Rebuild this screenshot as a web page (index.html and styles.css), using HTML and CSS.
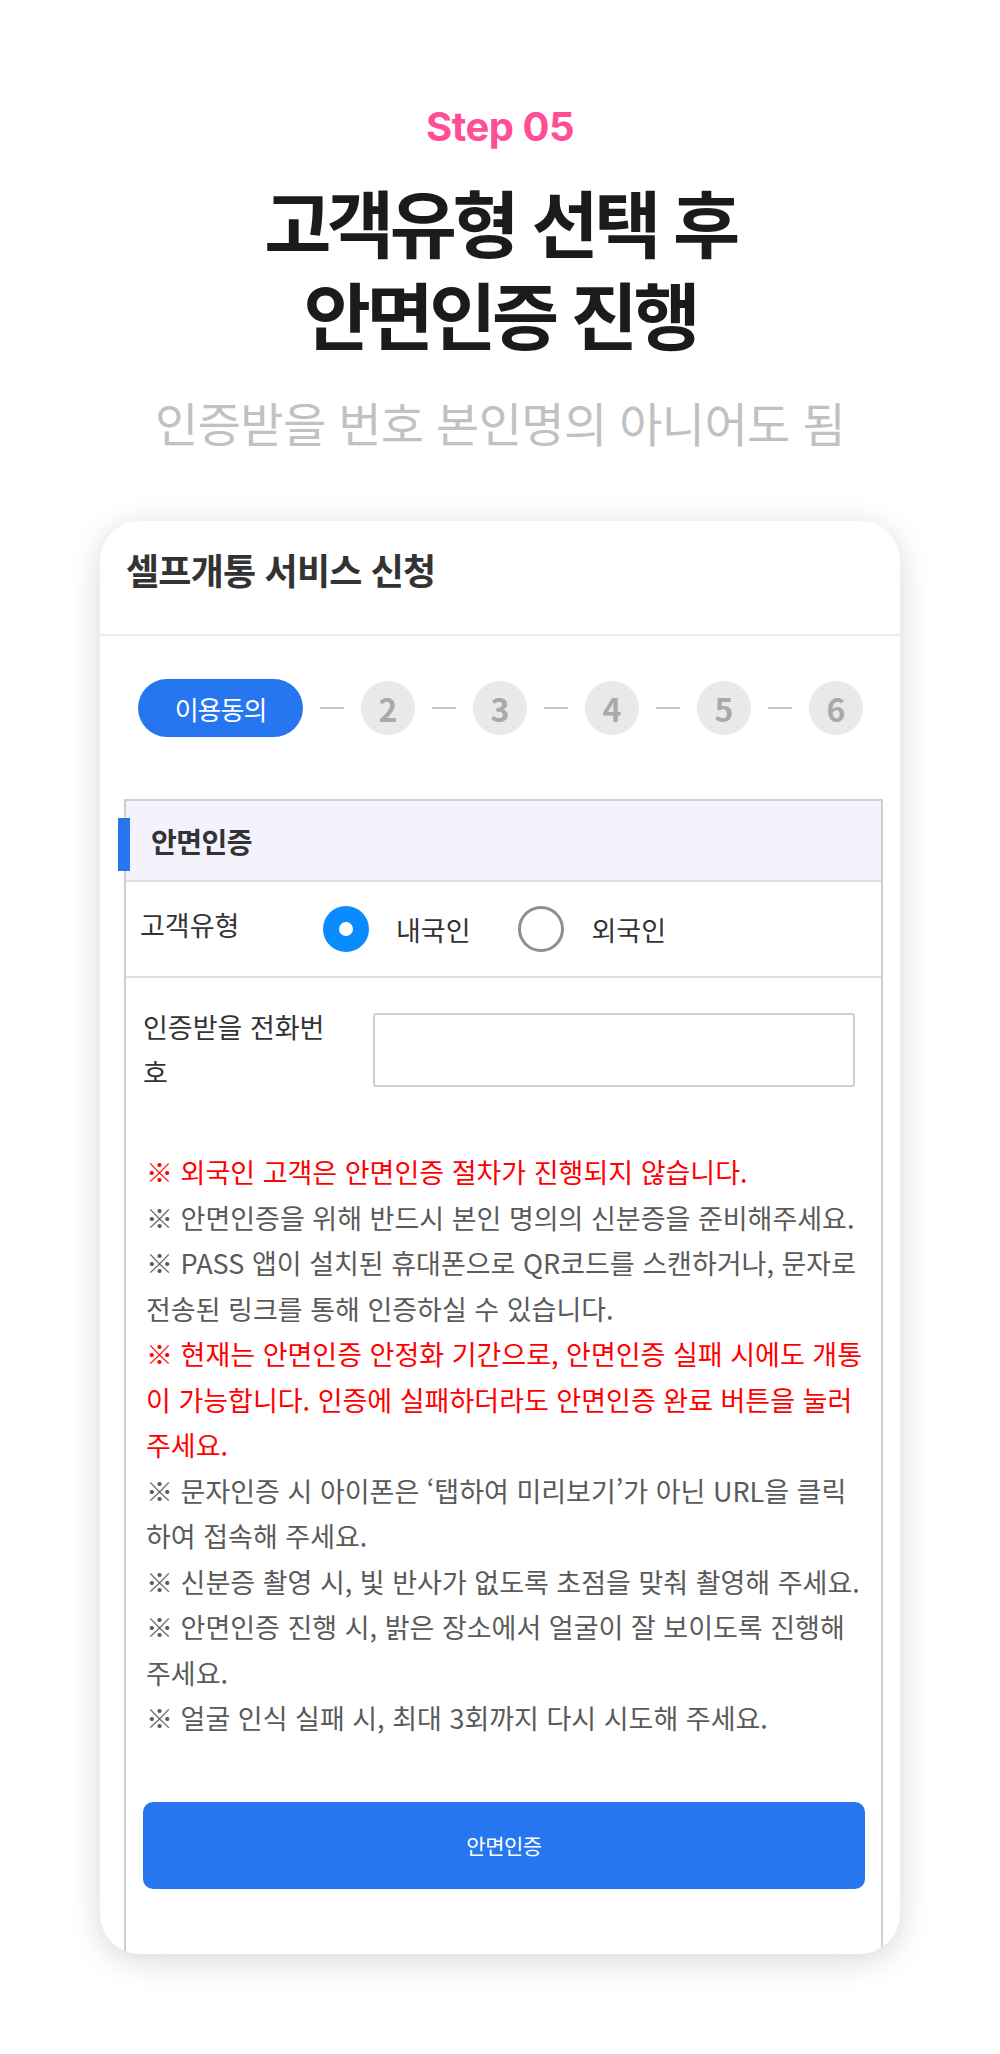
FILE: index.html
```html
<!DOCTYPE html>
<html lang="ko">
<head>
<meta charset="utf-8">
<title>Step 05 - 안면인증</title>
<link rel="stylesheet" href="styles.css">
</head>
<body>
<main class="page">
  <p class="step">Step 05</p>
  <h1 class="title"><span class="title-line">고객유형 선택 후</span><span class="title-line">안면인증 진행</span></h1>
  <p class="sub">인증받을 번호 본인명의 아니어도 됨</p>

  <section class="card">
    <header class="card-head">셀프개통 서비스 신청</header>

    <div class="steps">
      <span class="pill">이용동의</span>
      <span class="dash"></span><span class="num">2</span>
      <span class="dash"></span><span class="num">3</span>
      <span class="dash"></span><span class="num">4</span>
      <span class="dash"></span><span class="num">5</span>
      <span class="dash"></span><span class="num">6</span>
    </div>

    <div class="box">
      <div class="box-head"><span class="accent"></span>안면인증</div>

      <div class="row row-type">
        <span class="label">고객유형</span>
        <span class="radio on"></span><span class="opt">내국인</span>
        <span class="radio off"></span><span class="opt">외국인</span>
      </div>

      <div class="row row-phone">
        <span class="label label-phone">인증받을 전화번호</span>
        <span class="input"></span>
      </div>

      <div class="notes">
        <p class="red">※ 외국인 고객은 안면인증 절차가 진행되지 않습니다.</p>
        <p>※ 안면인증을 위해 반드시 본인 명의의 신분증을 준비해주세요.</p>
        <p>※ PASS 앱이 설치된 휴대폰으로 QR코드를 스캔하거나, 문자로 전송된 링크를 통해 인증하실 수 있습니다.</p>
        <p class="red">※ 현재는 안면인증 안정화 기간으로, 안면인증 실패 시에도 개통이 가능합니다. 인증에 실패하더라도 안면인증 완료 버튼을 눌러 주세요.</p>
        <p>※ 문자인증 시 아이폰은 ‘탭하여 미리보기’가 아닌 URL을 클릭하여 접속해 주세요.</p>
        <p>※ 신분증 촬영 시, 빛 반사가 없도록 초점을 맞춰 촬영해 주세요.</p>
        <p>※ 안면인증 진행 시, 밝은 장소에서 얼굴이 잘 보이도록 진행해 주세요.</p>
        <p>※ 얼굴 인식 실패 시, 최대 3회까지 다시 시도해 주세요.</p>
      </div>

      <button class="btn" type="button">안면인증</button>
    </div>
  </section>
</main>
</body>
</html>
```

FILE: styles.css
```css
* { box-sizing: border-box; }

html, body {
  margin: 0;
  padding: 0;
  background: #ffffff;
}

body {
  font-family: "Noto Sans CJK KR", "Noto Sans", sans-serif;
  color: #333333;
}

.page {
  width: 1000px;
  height: 2054px;
  padding-top: 103px;
  display: flex;
  flex-direction: column;
  align-items: center;
}

.step {
  margin: 0;
  font-family: Inter, "Noto Sans CJK KR", sans-serif;
  font-weight: 700;
  font-size: 40px;
  line-height: 48px;
  letter-spacing: -0.5px;
  color: #ff4d98;
}

.title {
  margin: 23px 0 0;
  font-weight: 700;
  font-size: 73px;
  line-height: 92px;
  letter-spacing: -4.4px;
  text-align: center;
  color: #1b1b1b;
}

.title-line {
  display: block;
  height: 92px;
}

.sub {
  margin: 34px 0 0;
  font-weight: 400;
  font-size: 47px;
  line-height: 60px;
  letter-spacing: -0.6px;
  color: #c1c1c1;
}

.card {
  margin-top: 69px;
  width: 800px;
  height: 1433px;
  flex: none;
  background: #ffffff;
  border-radius: 40px;
  box-shadow: 0 6px 32px rgba(0, 0, 0, 0.16);
  overflow: hidden;
}

.card-head {
  padding: 24px 26px 41px;
  font-weight: 700;
  font-size: 36px;
  line-height: 48px;
  letter-spacing: -0.8px;
  color: #333333;
  border-bottom: 2px solid #ececec;
}

.steps {
  display: flex;
  align-items: center;
  height: 58px;
  margin: 43px 0 0 38px;
}

.pill {
  width: 165px;
  height: 58px;
  border-radius: 29px;
  background: #2676f0;
  color: #ffffff;
  font-size: 26px;
  letter-spacing: -1px;
  display: flex;
  align-items: center;
  justify-content: center;
}

.dash {
  width: 24px;
  height: 2px;
  margin: 0 17px;
  background: #c9c9c9;
}

.num {
  width: 54px;
  height: 54px;
  border-radius: 50%;
  background: #e9e9e9;
  color: #a9a9a9;
  font-weight: 700;
  font-size: 32px;
  display: flex;
  align-items: center;
  justify-content: center;
}

.box {
  position: relative;
  margin: 62px 17px 0 24px;
  border: 2px solid #cfcfcf;
  border-bottom: none;
  padding-bottom: 120px;
}

.box-head {
  height: 81px;
  display: flex;
  align-items: center;
  padding-left: 25px;
  background: #f4f2fd;
  border-bottom: 2px solid #dedede;
  font-weight: 700;
  font-size: 28px;
  letter-spacing: -0.5px;
  color: #333333;
}

.accent {
  position: absolute;
  left: -8px;
  top: 17px;
  width: 12px;
  height: 53px;
  background: #2676f0;
}

.row {
  display: flex;
  align-items: center;
  font-size: 27px;
  color: #333333;
}

.row-type {
  height: 96px;
  padding-left: 14px;
  border-bottom: 2px solid #dedede;
}

.row-type .label {
  width: 183px;
  margin-bottom: 10px;
}

.radio {
  flex: none;
  width: 46px;
  height: 46px;
  border-radius: 50%;
  background: #ffffff;
}

.radio.on {
  border: 16px solid #0a8cff;
}

.radio.off {
  border: 3px solid #8e8e8e;
}

.opt {
  margin-left: 27px;
  margin-right: 47px;
}

.opt:last-child {
  margin-left: 28px;
}

.row-phone {
  padding: 27px 0 0 17px;
}

.label-phone {
  width: 205px;
  line-height: 44.5px;
  margin-right: 25px;
}

.input {
  width: 482px;
  height: 74px;
  border: 2px solid #cfcfcf;
  border-radius: 3px;
}

.notes {
  padding: 55px 12px 0 20px;
  font-size: 27px;
  line-height: 45.5px;
  letter-spacing: 0;
  color: #5a5a5a;
}

.notes p {
  margin: 0;
}

.notes .red {
  color: #ff0000;
}

.btn {
  display: block;
  width: 722px;
  height: 87px;
  margin: 61px 0 0 17px;
  border: none;
  border-radius: 10px;
  background: #2676f0;
  color: #ffffff;
  font-family: "Noto Sans CJK KR", sans-serif;
  font-size: 21px;
  letter-spacing: -0.5px;
}
```
